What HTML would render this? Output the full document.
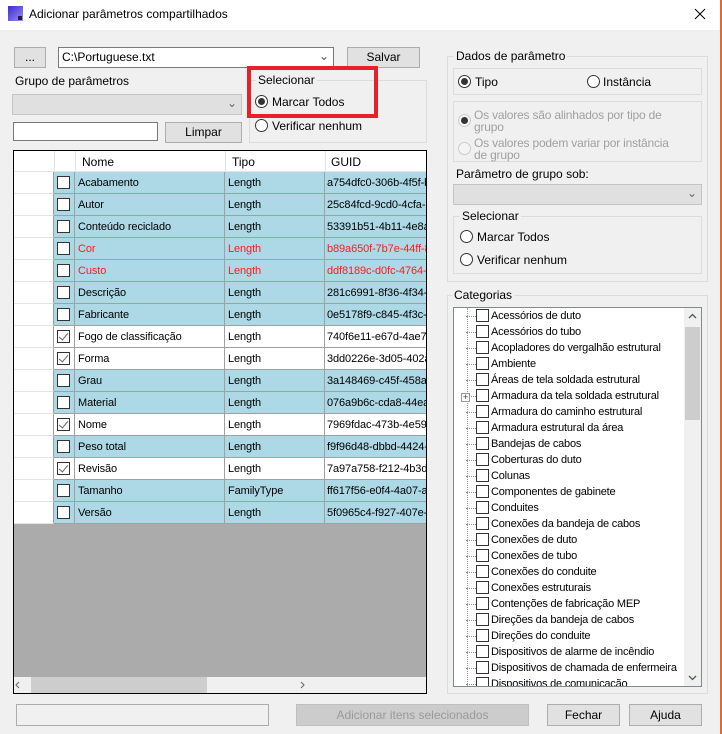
<!DOCTYPE html>
<html><head><meta charset="utf-8"><style>
*{box-sizing:border-box;margin:0;padding:0}
body{width:722px;height:734px;position:relative;background:#f0f0f0;font-family:"Liberation Sans",sans-serif;font-size:12px;color:#000;overflow:hidden}
.a{position:absolute}
.btn{position:absolute;background:#e1e1e1;border:1px solid #adadad;text-align:center}
.grp{position:absolute;border:1px solid #dcdcdc}
.lg{position:absolute;top:-8px;left:6px;background:#f0f0f0;padding:0 2px}
.rad{position:absolute;width:13px;height:13px;border:1px solid #333;border-radius:50%;background:#fff}
.rad.on::after{content:"";position:absolute;left:2px;top:2px;width:7px;height:7px;border-radius:50%;background:#333}
.row{position:absolute;left:14px;width:412px;height:22px;font-size:11px;letter-spacing:-0.1px}
.row div{position:absolute;top:0;height:22px;line-height:22px;border-right:1px solid #a0a0a0;border-bottom:1px solid #a0a0a0;white-space:nowrap;overflow:hidden}
.c0{left:0;width:40px;background:#fff;border-right:1px solid #a0a0a0;border-bottom:1px solid #e4e4e4!important}
.c1{left:40px;width:21px}.c2{left:61px;width:150px;padding-left:3px}.c3{left:211px;width:100px;padding-left:3px}.c4{left:311px;width:101px;padding-left:2px;border-right:none!important}
.b .c1,.b .c2,.b .c3,.b .c4{background:#add8e6}
.w .c1,.w .c2,.w .c3,.w .c4{background:#fff}
.r .c2,.r .c3,.r .c4{color:#ff1a1a}
.cb{position:absolute;left:3px;top:4px;width:13px;height:13px;border:1px solid #333;background:#fff}
.ck::after{content:"";position:absolute;left:3px;top:0px;width:4px;height:8px;border:solid #666;border-width:0 1.5px 1.5px 0;transform:rotate(40deg)}
.ti{position:absolute;left:466px;height:16px;width:220px;white-space:nowrap;font-size:11px;letter-spacing:-0.2px}
.ti .d{position:absolute;left:0;top:8px;width:10px;border-top:1px dotted #888}
.ti .x{position:absolute;left:10px;top:1px;width:13px;height:13px;border:1px solid #333;background:#fff}
.ti span{position:absolute;left:25px;top:0;line-height:16px}
</style></head><body>
<div class="a" style="left:0;top:0;width:722px;height:30px;background:#fff"></div>
<div class="a" style="left:8px;top:6px;width:15px;height:15px;background:linear-gradient(135deg,#3a2cd0,#9c8cf0);"></div>
<div class="a" style="left:18px;top:16px;width:4px;height:4px;background:#222"></div>
<div class="a" style="left:29px;top:7px;font-size:12px">Adicionar parâmetros compartilhados</div>
<svg class="a" style="left:694px;top:8px" width="12" height="12"><path d="M1 1L11 11M11 1L1 11" stroke="#000" stroke-width="1"/></svg>
<div class="a" style="left:720px;top:0;width:2px;height:734px;background:#e06a2a"></div>

<div class="btn" style="left:14px;top:47px;width:32px;height:21px;line-height:19px">...</div>
<div class="a" style="left:58px;top:47px;width:276px;height:21px;background:#fff;border:1px solid #7a7a7a;padding:2px 3px">C:\Portuguese.txt<span style="position:absolute;right:4px;top:1px;color:#555">⌄</span></div>
<div class="btn" style="left:347px;top:47px;width:73px;height:21px;line-height:19px">Salvar</div>
<div class="a" style="left:15px;top:74px">Grupo de parâmetros</div>
<div class="a" style="left:12px;top:94px;width:230px;height:21px;background:#e0e0e0;border:1px solid #c4c4c4"><span style="position:absolute;right:4px;top:1px;color:#666">⌄</span></div>
<div class="a" style="left:13px;top:122px;width:145px;height:19px;background:#fff;border:1px solid #7a7a7a"></div>
<div class="btn" style="left:165px;top:122px;width:77px;height:21px;line-height:19px">Limpar</div>
<div class="grp" style="left:249px;top:80px;width:178px;height:63px"><div class="lg" style="left:6px">Selecionar</div></div>
<div class="rad on" style="left:255px;top:95px"></div><div class="a" style="left:272px;top:95px">Marcar Todos</div>
<div class="rad" style="left:255px;top:119px"></div><div class="a" style="left:272px;top:119px">Verificar nenhum</div>
<div class="a" style="left:247px;top:66px;width:131px;height:52px;border:4px solid #e8202a"></div>

<div class="a" style="left:13px;top:150px;width:414px;height:544px;border:1px solid #000;background:#ababab"></div>
<div class="a" style="left:14px;top:151px;width:412px;height:21px;background:#fff;border-bottom:1px solid #e4e4e4"></div>
<div class="a" style="left:54px;top:151px;height:21px;border-left:1px solid #e4e4e4"></div>
<div class="a" style="left:75px;top:151px;height:21px;border-left:1px solid #e4e4e4"></div>
<div class="a" style="left:225px;top:151px;height:21px;border-left:1px solid #e4e4e4"></div>
<div class="a" style="left:325px;top:151px;height:21px;border-left:1px solid #e4e4e4"></div>
<div class="a" style="left:82px;top:155px">Nome</div><div class="a" style="left:232px;top:155px">Tipo</div><div class="a" style="left:331px;top:155px">GUID</div>

<div class="row b" style="top:172px"><div class="c0"></div><div class="c1"><i class="cb"></i></div><div class="c2">Acabamento</div><div class="c3">Length</div><div class="c4">a754dfc0-306b-4f5f-b</div></div>
<div class="row b" style="top:194px"><div class="c0"></div><div class="c1"><i class="cb"></i></div><div class="c2">Autor</div><div class="c3">Length</div><div class="c4">25c84fcd-9cd0-4cfa-</div></div>
<div class="row b" style="top:216px"><div class="c0"></div><div class="c1"><i class="cb"></i></div><div class="c2">Conteúdo reciclado</div><div class="c3">Length</div><div class="c4">53391b51-4b11-4e8a</div></div>
<div class="row b r" style="top:238px"><div class="c0"></div><div class="c1"><i class="cb"></i></div><div class="c2">Cor</div><div class="c3">Length</div><div class="c4">b89a650f-7b7e-44ff-8</div></div>
<div class="row b r" style="top:260px"><div class="c0"></div><div class="c1"><i class="cb"></i></div><div class="c2">Custo</div><div class="c3">Length</div><div class="c4">ddf8189c-d0fc-4764-</div></div>
<div class="row b" style="top:282px"><div class="c0"></div><div class="c1"><i class="cb"></i></div><div class="c2">Descrição</div><div class="c3">Length</div><div class="c4">281c6991-8f36-4f34-</div></div>
<div class="row b" style="top:304px"><div class="c0"></div><div class="c1"><i class="cb"></i></div><div class="c2">Fabricante</div><div class="c3">Length</div><div class="c4">0e5178f9-c845-4f3c-</div></div>
<div class="row w" style="top:326px"><div class="c0"></div><div class="c1"><i class="cb ck"></i></div><div class="c2">Fogo de classificação</div><div class="c3">Length</div><div class="c4">740f6e11-e67d-4ae7</div></div>
<div class="row w" style="top:348px"><div class="c0"></div><div class="c1"><i class="cb ck"></i></div><div class="c2">Forma</div><div class="c3">Length</div><div class="c4">3dd0226e-3d05-402a</div></div>
<div class="row b" style="top:370px"><div class="c0"></div><div class="c1"><i class="cb"></i></div><div class="c2">Grau</div><div class="c3">Length</div><div class="c4">3a148469-c45f-458a</div></div>
<div class="row b" style="top:392px"><div class="c0"></div><div class="c1"><i class="cb"></i></div><div class="c2">Material</div><div class="c3">Length</div><div class="c4">076a9b6c-cda8-44ea</div></div>
<div class="row w" style="top:414px"><div class="c0"></div><div class="c1"><i class="cb ck"></i></div><div class="c2">Nome</div><div class="c3">Length</div><div class="c4">7969fdac-473b-4e59</div></div>
<div class="row b" style="top:436px"><div class="c0"></div><div class="c1"><i class="cb"></i></div><div class="c2">Peso total</div><div class="c3">Length</div><div class="c4">f9f96d48-dbbd-4424-</div></div>
<div class="row w" style="top:458px"><div class="c0"></div><div class="c1"><i class="cb ck"></i></div><div class="c2">Revisão</div><div class="c3">Length</div><div class="c4">7a97a758-f212-4b3d</div></div>
<div class="row b" style="top:480px"><div class="c0"></div><div class="c1"><i class="cb"></i></div><div class="c2">Tamanho</div><div class="c3">FamilyType</div><div class="c4">ff617f56-e0f4-4a07-a</div></div>
<div class="row b" style="top:502px"><div class="c0"></div><div class="c1"><i class="cb"></i></div><div class="c2">Versão</div><div class="c3">Length</div><div class="c4">5f0965c4-f927-407e-</div></div>

<div class="a" style="left:14px;top:677px;width:412px;height:16px;background:#f0f0f0"></div>
<div class="a" style="left:31px;top:677px;width:176px;height:16px;background:#cdcdcd"></div>
<svg class="a" style="left:14px;top:677px" width="412" height="16"><path d="M5 5L2 8L5 11M287 5L290 8L287 11" stroke="#666" fill="none"/></svg>

<div class="grp" style="left:447px;top:56px;width:261px;height:226px"><div class="lg">Dados de parâmetro</div></div>
<div class="grp" style="left:453px;top:68px;width:249px;height:27px"></div>
<div class="rad on" style="left:458px;top:75px"></div><div class="a" style="left:475px;top:75px">Tipo</div>
<div class="rad" style="left:587px;top:75px"></div><div class="a" style="left:603px;top:75px">Instância</div>
<div class="grp" style="left:453px;top:101px;width:249px;height:61px"></div>
<div class="rad on" style="left:458px;top:114px;border-color:#ccc;background:#f4f4f4"></div>
<div class="a" style="left:474px;top:109px;color:#a0a0a0;line-height:12px;letter-spacing:-0.2px">Os valores são alinhados por tipo de<br>grupo</div>
<div class="rad" style="left:458px;top:142px;border-color:#ccc;background:#f4f4f4"></div>
<div class="a" style="left:474px;top:137px;color:#a0a0a0;line-height:12px;letter-spacing:-0.2px">Os valores podem variar por instância<br>de grupo</div>
<div class="a" style="left:456px;top:167px">Parâmetro de grupo sob:</div>
<div class="a" style="left:453px;top:184px;width:249px;height:21px;background:#e0e0e0;border:1px solid #c4c4c4"><span style="position:absolute;right:4px;top:1px;color:#666">⌄</span></div>
<div class="grp" style="left:453px;top:216px;width:249px;height:58px"><div class="lg">Selecionar</div></div>
<div class="rad" style="left:460px;top:230px"></div><div class="a" style="left:477px;top:230px">Marcar Todos</div>
<div class="rad" style="left:460px;top:253px"></div><div class="a" style="left:477px;top:253px">Verificar nenhum</div>

<div class="grp" style="left:447px;top:295px;width:261px;height:399px"><div class="lg" style="left:4px">Categorias</div></div>
<div class="a" style="left:453px;top:307px;width:249px;height:380px;background:#fff;border:1px solid #828790;overflow:hidden">
<div class="a" style="left:13px;top:0;height:380px;border-left:1px dotted #999"></div>
</div>
<div class="a" style="left:461px;top:393px;width:9px;height:9px;border:1px solid #999;background:#fff;font-size:9px;line-height:7px;text-align:center;color:#333">+</div>
<div class="ti" style="top:308px"><i class="d"></i><i class="x"></i><span>Acessórios de duto</span></div>
<div class="ti" style="top:324px"><i class="d"></i><i class="x"></i><span>Acessórios do tubo</span></div>
<div class="ti" style="top:340px"><i class="d"></i><i class="x"></i><span>Acopladores do vergalhão estrutural</span></div>
<div class="ti" style="top:356px"><i class="d"></i><i class="x"></i><span>Ambiente</span></div>
<div class="ti" style="top:372px"><i class="d"></i><i class="x"></i><span>Áreas de tela soldada estrutural</span></div>
<div class="ti" style="top:388px"><i class="d" style="left:5px;width:5px"></i><i class="x"></i><span>Armadura da tela soldada estrutural</span></div>
<div class="ti" style="top:404px"><i class="d"></i><i class="x"></i><span>Armadura do caminho estrutural</span></div>
<div class="ti" style="top:420px"><i class="d"></i><i class="x"></i><span>Armadura estrutural da área</span></div>
<div class="ti" style="top:436px"><i class="d"></i><i class="x"></i><span>Bandejas de cabos</span></div>
<div class="ti" style="top:452px"><i class="d"></i><i class="x"></i><span>Coberturas do duto</span></div>
<div class="ti" style="top:468px"><i class="d"></i><i class="x"></i><span>Colunas</span></div>
<div class="ti" style="top:484px"><i class="d"></i><i class="x"></i><span>Componentes de gabinete</span></div>
<div class="ti" style="top:500px"><i class="d"></i><i class="x"></i><span>Conduites</span></div>
<div class="ti" style="top:516px"><i class="d"></i><i class="x"></i><span>Conexões da bandeja de cabos</span></div>
<div class="ti" style="top:532px"><i class="d"></i><i class="x"></i><span>Conexões de duto</span></div>
<div class="ti" style="top:548px"><i class="d"></i><i class="x"></i><span>Conexões de tubo</span></div>
<div class="ti" style="top:564px"><i class="d"></i><i class="x"></i><span>Conexões do conduite</span></div>
<div class="ti" style="top:580px"><i class="d"></i><i class="x"></i><span>Conexões estruturais</span></div>
<div class="ti" style="top:596px"><i class="d"></i><i class="x"></i><span>Contenções de fabricação MEP</span></div>
<div class="ti" style="top:612px"><i class="d"></i><i class="x"></i><span>Direções da bandeja de cabos</span></div>
<div class="ti" style="top:628px"><i class="d"></i><i class="x"></i><span>Direções do conduite</span></div>
<div class="ti" style="top:644px"><i class="d"></i><i class="x"></i><span>Dispositivos de alarme de incêndio</span></div>
<div class="ti" style="top:660px"><i class="d"></i><i class="x"></i><span>Dispositivos de chamada de enfermeira</span></div>
<div class="a" style="left:453px;top:676px;width:231px;height:10px;overflow:hidden"><div class="ti" style="left:13px;top:0"><i class="d"></i><i class="x"></i><span>Dispositivos de comunicação</span></div></div>
<div class="a" style="left:684px;top:308px;width:17px;height:378px;background:#f0f0f0"></div>
<div class="a" style="left:685px;top:327px;width:15px;height:93px;background:#cdcdcd"></div>
<svg class="a" style="left:684px;top:308px" width="17" height="378"><path d="M5 10L8.5 6.5L12 10M5 368L8.5 371.5L12 368" stroke="#555" fill="none" stroke-width="1.3"/></svg>

<div class="a" style="left:16px;top:704px;width:253px;height:22px;border:1px solid #adadad;background:#f0f0f0"></div>
<div class="btn" style="left:296px;top:704px;width:233px;height:22px;line-height:20px;background:#ccc;border-color:#bfbfbf;color:#9a9a9a">Adicionar itens selecionados</div>
<div class="btn" style="left:547px;top:704px;width:73px;height:22px;line-height:20px">Fechar</div>
<div class="btn" style="left:629px;top:704px;width:73px;height:22px;line-height:20px">Ajuda</div>
</body></html>
